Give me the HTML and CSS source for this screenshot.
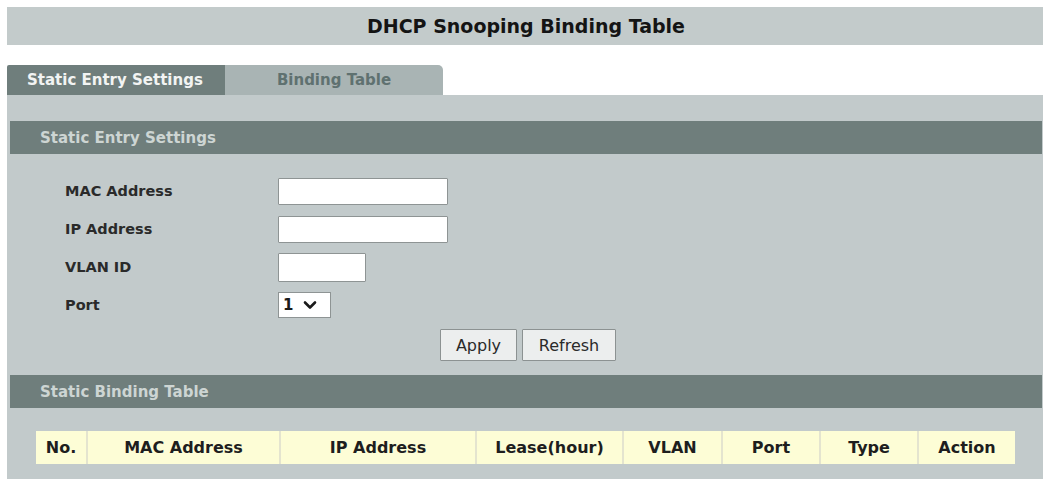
FILE: index.html
```html
<!DOCTYPE html>
<html lang="en">
<head>
<meta charset="utf-8">
<title>DHCP Snooping Binding Table</title>
<link rel="stylesheet" href="styles.css">
</head>
<body>
<div class="page">
  <div class="title-bar">DHCP Snooping Binding Table</div>

  <div class="tabs">
    <div class="tab tab-active">Static Entry Settings</div>
    <div class="tab tab-idle">Binding Table</div>
  </div>

  <div class="panel">
    <div class="section-head">Static Entry Settings</div>

    <form class="entry-form">
      <div class="form-row">
        <label class="form-label">MAC Address</label>
        <input class="text-input wide" type="text">
      </div>
      <div class="form-row">
        <label class="form-label">IP Address</label>
        <input class="text-input wide" type="text">
      </div>
      <div class="form-row">
        <label class="form-label">VLAN ID</label>
        <input class="text-input narrow" type="text">
      </div>
      <div class="form-row">
        <label class="form-label">Port</label>
        <div class="port-select">
          <span class="port-value">1</span>
          <svg class="chevron" width="14" height="10" viewBox="0 0 14 10">
            <path d="M2 2.5 L7 7.5 L12 2.5" fill="none" stroke="#1a1a1a" stroke-width="2.6" stroke-linecap="round" stroke-linejoin="round"/>
          </svg>
        </div>
      </div>
      <div class="button-row">
        <button class="btn btn-apply" type="button">Apply</button>
        <button class="btn btn-refresh" type="button">Refresh</button>
      </div>
    </form>

    <div class="section-head">Static Binding Table</div>

    <div class="table-wrap">
      <table class="binding-table">
        <thead>
          <tr>
            <th class="c-no">No.</th>
            <th class="c-mac">MAC Address</th>
            <th class="c-ip">IP Address</th>
            <th class="c-lease">Lease(hour)</th>
            <th class="c-vlan">VLAN</th>
            <th class="c-port">Port</th>
            <th class="c-type">Type</th>
            <th class="c-action">Action</th>
          </tr>
        </thead>
      </table>
    </div>
  </div>
</div>
</body>
</html>
```

FILE: styles.css
```css
* {
  box-sizing: border-box;
}

html, body {
  margin: 0;
  padding: 0;
  background: #ffffff;
  overflow: hidden;
}

body {
  font-family: "DejaVu Sans", Verdana, sans-serif;
  color: #222;
}

.page {
  padding: 7px 3px 0 7px;
}

/* page title */
.title-bar {
  height: 38px;
  background: #c3cbcb;
  display: flex;
  align-items: center;
  justify-content: center;
  font-size: 19px;
  font-weight: bold;
  color: #141414;
  padding-left: 2px;
}

/* tab strip */
.tabs {
  display: flex;
  margin-top: 20px;
  height: 30px;
}

.tab {
  width: 218px;
  height: 30px;
  display: flex;
  align-items: center;
  font-size: 15px;
  font-weight: bold;
}

.tab-active {
  background: #6f7e7c;
  color: #f2f4f3;
  padding-left: 20px;
  border-radius: 2px 0 0 0;
}

.tab-idle {
  background: #a9b4b4;
  color: #5f7170;
  justify-content: center;
  border-radius: 0 5px 0 0;
}

/* main panel */
.panel {
  background: #c2cacb;
  padding: 26px 1px 20px 3px;
  min-height: 400px;
}

.section-head {
  height: 33px;
  background: #6f7e7c;
  color: #cdd5d3;
  font-size: 15px;
  font-weight: bold;
  display: flex;
  align-items: center;
  padding-left: 30px;
}

/* entry form */
.entry-form {
  padding: 18px 0 14px 0;
  margin: 0;
}

.form-row {
  height: 38px;
  display: flex;
  align-items: center;
  padding-left: 55px;
}

.form-label {
  width: 213px;
  font-size: 14.5px;
  font-weight: bold;
  color: #2a2a2a;
}

.text-input {
  height: 27px;
  background: #ffffff;
  border: 1px solid #8e9494;
  border-radius: 1px;
  padding: 0 3px;
  font: inherit;
}

.text-input.wide {
  width: 170px;
}

.text-input.narrow {
  width: 88px;
  height: 29px;
}

.port-select {
  width: 53px;
  height: 26px;
  background: #ffffff;
  border: 1px solid #8e9494;
  display: flex;
  align-items: center;
  gap: 10px;
  padding-left: 4px;
  font-size: 15px;
  font-weight: bold;
  color: #1a1a1a;
}

.chevron {
  display: block;
}

.button-row {
  display: flex;
  justify-content: center;
  gap: 5px;
  margin-top: 5px;
  padding-left: 4px;
}

.btn {
  height: 32px;
  background: #eceeee;
  border: 1px solid #8c9292;
  border-radius: 1px;
  font-family: "DejaVu Sans", Verdana, sans-serif;
  font-size: 16px;
  color: #2a2a2a;
  padding: 0;
}

.btn-apply {
  width: 77px;
}

.btn-refresh {
  width: 94px;
}

/* binding table */
.table-wrap {
  padding: 23px 28px 0 26px;
}

.binding-table {
  width: 979px;
  border-collapse: collapse;
  table-layout: fixed;
}

.binding-table th {
  height: 33px;
  background: #fdfdd6;
  border-left: 2px solid #e4e4cf;
  font-size: 16px;
  font-weight: bold;
  color: #1e1e1e;
  text-align: center;
  padding: 0;
}

.binding-table th:first-child {
  border-left: none;
}

.c-no { width: 51px; }
.c-mac { width: 193px; }
.c-ip { width: 196px; }
.c-lease { width: 147px; }
.c-vlan { width: 99px; }
.c-port { width: 98px; }
.c-type { width: 98px; }
.c-action { width: 97px; }
```
